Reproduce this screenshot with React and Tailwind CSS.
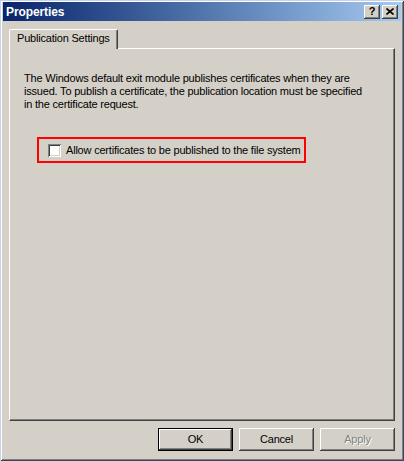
export default function App() {
  const raised =
    'shadow-[inset_-1px_-1px_#404040,inset_1px_1px_#ffffff,inset_-2px_-2px_#808080,inset_2px_2px_#d4d0c8]'

  return (
    <div className="w-[404px] h-[461px] flex flex-col bg-[#d4d0c8] pt-[2px] px-[3px] pb-[3px] font-['Liberation_Sans',Arial,sans-serif] shadow-[inset_1px_1px_#c3d3ea,inset_-1px_-1px_#34466a,inset_2px_2px_#ffffff,inset_-2px_-2px_#808080]">
      {/* title bar */}
      <div className="h-[19px] flex items-center justify-between pl-[3px] pr-[3px] bg-linear-to-r from-[#0a246a] to-[#a6caf0]">
        <span className="text-white font-bold text-[12px] tracking-[-0.1px] leading-none">Properties</span>
        <div className="flex gap-[2px]">
          <div className={`w-[16px] h-[14px] bg-[#d4d0c8] flex items-center justify-center ${raised}`}>
            <span className="text-black font-bold text-[11px] leading-none">?</span>
          </div>
          <div className={`w-[16px] h-[14px] bg-[#d4d0c8] flex items-center justify-center ${raised}`}>
            <svg width="8" height="7" viewBox="0 0 8 7">
              <path d="M0.5 0.5 L7.5 6.5 M7.5 0.5 L0.5 6.5" stroke="#000" strokeWidth="1.6" />
            </svg>
          </div>
        </div>
      </div>

      <div className="flex-1 flex flex-col px-[6px] pt-[8px] pb-[7px]">
        {/* tab */}
        <div className="flex">
          <div className="relative z-10 -mb-px h-[20px] w-[109px] pl-[7px] pt-[2px] bg-[#d4d0c8] border-t border-l border-white border-r border-r-[#404040] rounded-t-[2px] shadow-[inset_-1px_0_#808080] text-[11px] leading-[13px] tracking-[-0.2px] text-black">
            Publication Settings
          </div>
        </div>

        {/* panel */}
        <div className="flex-1 flex flex-col border border-t-white border-l-white border-r-[#404040] border-b-[#404040] shadow-[inset_-1px_-1px_#808080] pl-[14px] pt-[23px]">
          <p className="text-[11px] leading-[13px] tracking-[-0.2px] text-black">
            The Windows default exit module publishes certificates when they are
            <br />
            issued. To publish a certificate, the publication location must be specified
            <br />
            in the certificate request.
          </p>

          <div className="mt-[26px] ml-[13px] w-[269px] h-[26px] border-2 border-[#ff0000] flex items-center pl-[9px]">
            <div className="w-[13px] h-[13px] bg-white shadow-[inset_1px_1px_#808080,inset_-1px_-1px_#ffffff,inset_2px_2px_#404040,inset_-2px_-2px_#d4d0c8]" />
            <span className="ml-[5px] text-[11px] leading-[13px] tracking-[-0.2px] text-black">
              Allow certificates to be published to the file system
            </span>
          </div>
        </div>

        {/* buttons */}
        <div className="mt-[7px] flex justify-end gap-[6px]">
          <button className={`w-[75px] h-[23px] border border-black bg-[#d4d0c8] text-[11px] tracking-[-0.2px] text-black ${raised}`}>
            OK
          </button>
          <button className={`w-[75px] h-[23px] bg-[#d4d0c8] text-[11px] tracking-[-0.2px] text-black ${raised}`}>
            Cancel
          </button>
          <button className={`w-[75px] h-[23px] bg-[#d4d0c8] text-[11px] tracking-[-0.2px] text-[#808080] [text-shadow:1px_1px_0_#ffffff] ${raised}`}>
            Apply
          </button>
        </div>
      </div>
    </div>
  )
}
